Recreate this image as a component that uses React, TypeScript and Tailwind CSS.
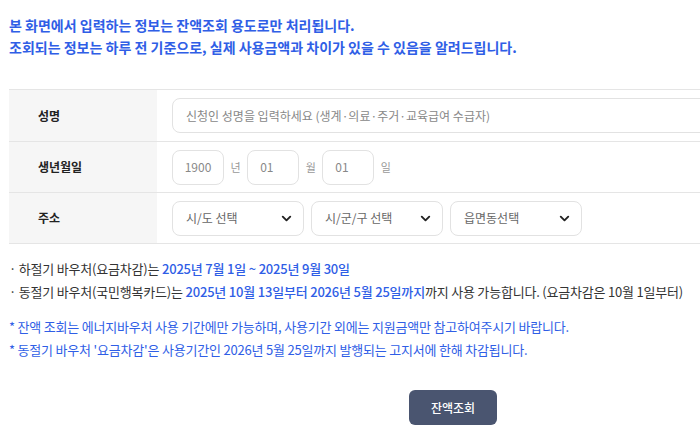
import { ChevronDown } from "lucide-react";

const font = { fontFamily: '"Noto Sans CJK KR", "Noto Sans", sans-serif' };

function Select({ label }: { label: string }) {
  return (
    <div className="flex h-[35px] w-[132px] items-center justify-between rounded-lg border border-[#e2e2e2] bg-white pl-[13px] pr-[9px] text-[12px] text-[#666]">
      <span>{label}</span>
      <ChevronDown className="h-[15px] w-[15px] text-[#222]" strokeWidth={3} />
    </div>
  );
}

export default function App() {
  return (
    <div className="min-h-screen overflow-hidden bg-white" style={font}>
      <div className="ml-[9px] w-[888px] pt-[14px]">
        <div className="text-[14px] font-semibold leading-[22px] text-[#2f5ee6]">
          <p>본 화면에서 입력하는 정보는 잔액조회 용도로만 처리됩니다.</p>
          <p>조회되는 정보는 하루 전 기준으로, 실제 사용금액과 차이가 있을 수 있음을 알려드립니다.</p>
        </div>

        <div className="mt-[31px] border-t border-b border-[#e5e5e5] text-[12px]">
          <div className="flex h-[52px] border-b border-[#e5e5e5]">
            <div className="flex w-[148px] items-center bg-[#f6f6f6] pl-[29px] font-semibold text-[#222]">성명</div>
            <div className="flex flex-1 items-center pl-[15px]">
              <div className="flex h-[35px] flex-1 items-center rounded-lg border border-[#e2e2e2] pl-[13px] text-[#888]">
                신청인 성명을 입력하세요 (생계·의료·주거·교육급여 수급자)
              </div>
            </div>
          </div>
          <div className="flex h-[51px] border-b border-[#e5e5e5]">
            <div className="flex w-[148px] items-center bg-[#f6f6f6] pl-[29px] font-semibold text-[#222]">생년월일</div>
            <div className="flex flex-1 items-center gap-[6.5px] pl-[15px] text-[#888]">
              <div className="flex h-[35px] w-[52px] items-center justify-center rounded-lg border border-[#e2e2e2]">1900</div>
              <span className="text-[11px] text-[#999]">년</span>
              <div className="flex h-[35px] w-[52px] items-center rounded-lg border border-[#e2e2e2] pl-[12px]">01</div>
              <span className="text-[11px] text-[#999]">월</span>
              <div className="flex h-[35px] w-[52px] items-center rounded-lg border border-[#e2e2e2] pl-[12px]">01</div>
              <span className="text-[11px] text-[#999]">일</span>
            </div>
          </div>
          <div className="flex h-[50px]">
            <div className="flex w-[148px] items-center bg-[#f6f6f6] pl-[29px] font-semibold text-[#222]">주소</div>
            <div className="flex flex-1 items-center gap-[7px] pl-[15px]">
              <Select label="시/도 선택" />
              <Select label="시/군/구 선택" />
              <Select label="읍면동선택" />
            </div>
          </div>
        </div>

        <div className="mt-[13px] text-[13px] leading-[23px] tracking-[-0.2px] text-[#333]">
          <p>
            · 하절기 바우처(요금차감)는 <span className="font-medium text-[#2f5ee6]">2025년 7월 1일 ~ 2025년 9월 30일</span>
          </p>
          <p>
            · 동절기 바우처(국민행복카드)는{" "}
            <span className="font-medium text-[#2f5ee6]">2025년 10월 13일부터 2026년 5월 25일까지</span>까지 사용 가능합니다. (요금차감은 10월 1일부터)
          </p>
        </div>

        <div className="mt-[12px] text-[13px] leading-[23px] tracking-[-0.2px] text-[#2f5ee6]">
          <p>* 잔액 조회는 에너지바우처 사용 기간에만 가능하며, 사용기간 외에는 지원금액만 참고하여주시기 바랍니다.</p>
          <p>* 동절기 바우처 '요금차감'은 사용기간인 2026년 5월 25일까지 발행되는 고지서에 한해 차감됩니다.</p>
        </div>

        <div className="mt-[29px] flex justify-center">
          <button className="h-[35px] w-[88px] rounded-md bg-[#4a5570] text-[12px] font-medium text-white">잔액조회</button>
        </div>
      </div>
    </div>
  );
}
